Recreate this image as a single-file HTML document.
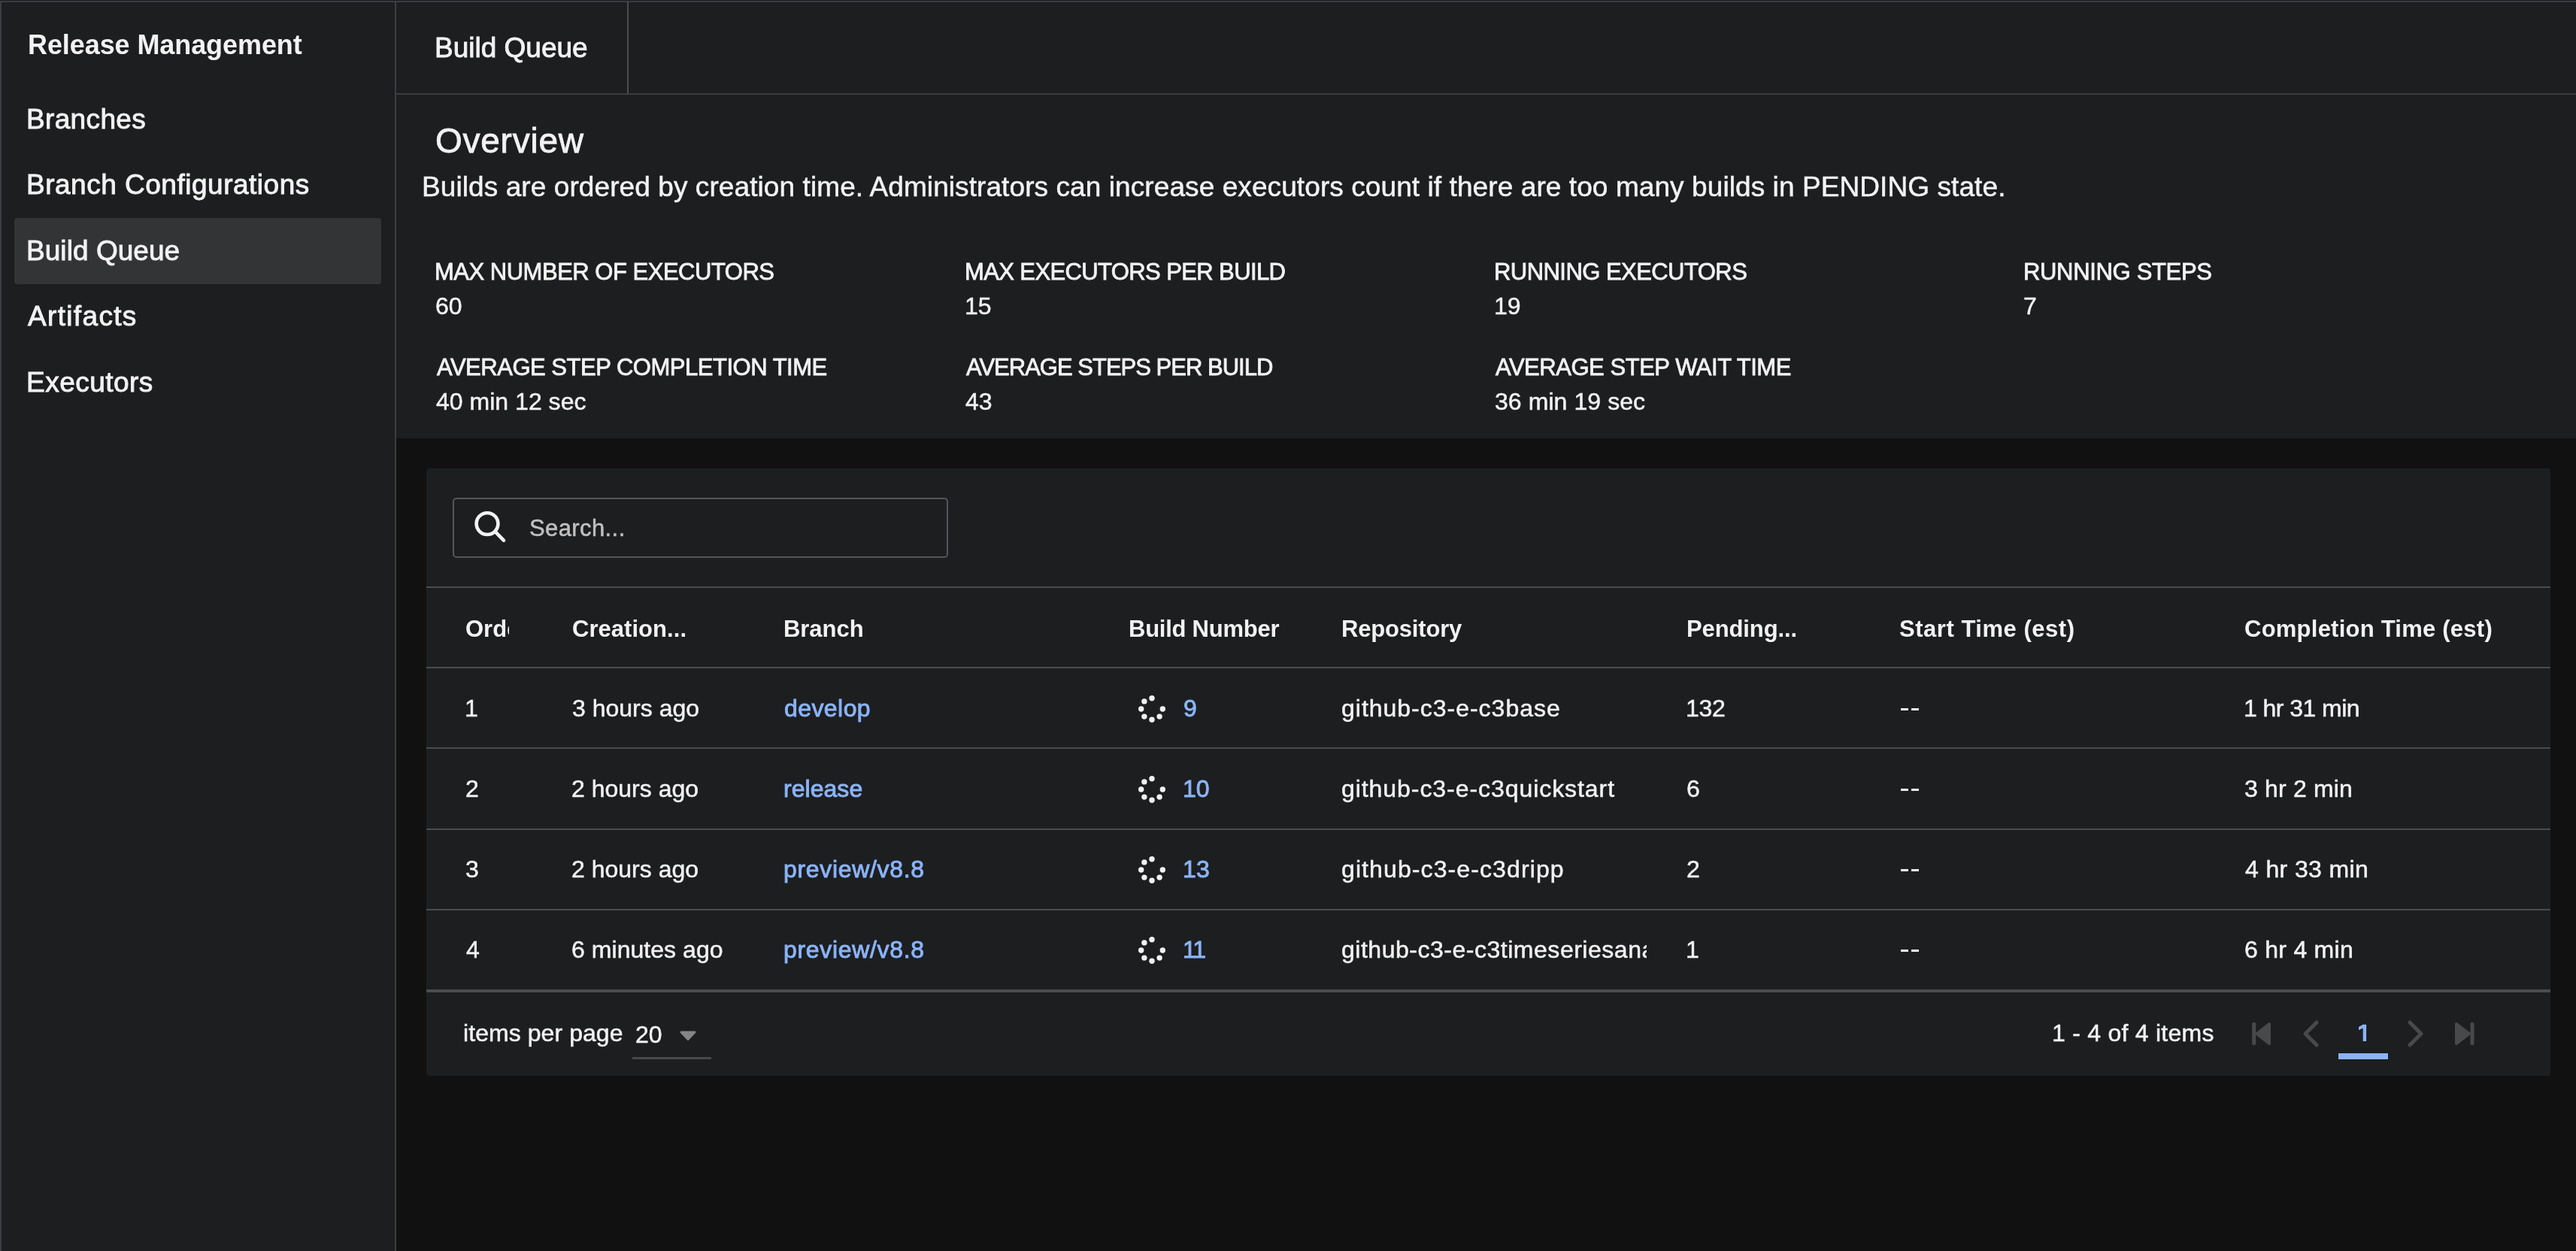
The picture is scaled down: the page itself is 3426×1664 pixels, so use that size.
<!DOCTYPE html>
<html><head><meta charset="utf-8"><style>
html,body{margin:0;padding:0;width:3426px;height:1664px;overflow:hidden;background:#111;}
body{position:relative;font-family:"Liberation Sans",sans-serif;}
div{will-change:transform;}
</style></head><body>
<div style="position:absolute;left:0px;top:0px;width:3426px;height:1664px;background:#1b1c1e;"></div>
<div style="position:absolute;left:0px;top:1px;width:3426px;height:1663px;background:#3c3d41;"></div>
<div style="position:absolute;left:2px;top:3px;width:3424px;height:1661px;background:#1d1e20;"></div>
<div style="position:absolute;left:525px;top:3px;width:2px;height:1661px;background:#3c3d41;"></div>
<div style="position:absolute;left:527px;top:126px;width:2899px;height:1538px;background:#111111;"></div>
<div style="position:absolute;left:527px;top:126px;width:2899px;height:457px;background:#1d1e20;"></div>
<div style="position:absolute;left:527px;top:124px;width:2899px;height:2px;background:#3c3d41;"></div>
<div style="position:absolute;left:834px;top:3px;width:2px;height:121px;background:#4b4c4e;"></div>
<div style="position:absolute;left:19px;top:290px;width:488px;height:88px;background:#333436;border-radius:4px;"></div>
<div style="position:absolute;left:24.66px;top:30px;padding:12px;font-size:36px;line-height:36px;color:#f2f2f2;white-space:nowrap;font-weight:bold;letter-spacing:-0.084px;">Release Management</div>
<div style="position:absolute;left:23.34px;top:128px;padding:12px;font-size:37px;line-height:37px;color:#f2f2f2;white-space:nowrap;letter-spacing:0.347px;-webkit-text-stroke:0.9px #f2f2f2;">Branches</div>
<div style="position:absolute;left:23.34px;top:215px;padding:12px;font-size:37px;line-height:37px;color:#f2f2f2;white-space:nowrap;letter-spacing:0.507px;-webkit-text-stroke:0.9px #f2f2f2;">Branch Configurations</div>
<div style="position:absolute;left:23.24px;top:303px;padding:12px;font-size:37px;line-height:37px;color:#f2f2f2;white-space:nowrap;letter-spacing:0.054px;-webkit-text-stroke:0.9px #f2f2f2;">Build Queue</div>
<div style="position:absolute;left:25.30px;top:390px;padding:12px;font-size:37px;line-height:37px;color:#f2f2f2;white-space:nowrap;letter-spacing:1.341px;-webkit-text-stroke:0.9px #f2f2f2;">Artifacts</div>
<div style="position:absolute;left:23.24px;top:478px;padding:12px;font-size:37px;line-height:37px;color:#f2f2f2;white-space:nowrap;letter-spacing:0.474px;-webkit-text-stroke:0.9px #f2f2f2;">Executors</div>
<div style="position:absolute;left:566.24px;top:33px;padding:12px;font-size:37px;line-height:37px;color:#f2f2f2;white-space:nowrap;-webkit-text-stroke:0.9px #f2f2f2;">Build Queue</div>
<div style="position:absolute;left:566.93px;top:152px;padding:12px;font-size:46px;line-height:46px;color:#f2f2f2;white-space:nowrap;letter-spacing:0.750px;-webkit-text-stroke:0.8px #f2f2f2;">Overview</div>
<div style="position:absolute;left:549.04px;top:218px;padding:12px;font-size:37px;line-height:37px;color:#f2f2f2;white-space:nowrap;letter-spacing:0.086px;-webkit-text-stroke:0.5px #f2f2f2;">Builds are ordered by creation time. Administrators can increase executors count if there are too many builds in PENDING state.</div>
<div style="position:absolute;left:566.02px;top:334px;padding:12px;font-size:31px;line-height:31px;color:#f2f2f2;white-space:nowrap;letter-spacing:-0.491px;-webkit-text-stroke:0.8px #f2f2f2;">MAX NUMBER OF EXECUTORS</div>
<div style="position:absolute;left:566.90px;top:379px;padding:12px;font-size:32px;line-height:32px;color:#f2f2f2;white-space:nowrap;-webkit-text-stroke:0.5px #f2f2f2;">60</div>
<div style="position:absolute;left:1270.52px;top:334px;padding:12px;font-size:31px;line-height:31px;color:#f2f2f2;white-space:nowrap;letter-spacing:-0.613px;-webkit-text-stroke:0.8px #f2f2f2;">MAX EXECUTORS PER BUILD</div>
<div style="position:absolute;left:1270.60px;top:379px;padding:12px;font-size:32px;line-height:32px;color:#f2f2f2;white-space:nowrap;-webkit-text-stroke:0.5px #f2f2f2;">15</div>
<div style="position:absolute;left:1974.52px;top:334px;padding:12px;font-size:31px;line-height:31px;color:#f2f2f2;white-space:nowrap;letter-spacing:-0.548px;-webkit-text-stroke:0.8px #f2f2f2;">RUNNING EXECUTORS</div>
<div style="position:absolute;left:1974.60px;top:379px;padding:12px;font-size:32px;line-height:32px;color:#f2f2f2;white-space:nowrap;-webkit-text-stroke:0.5px #f2f2f2;">19</div>
<div style="position:absolute;left:2678.52px;top:334px;padding:12px;font-size:31px;line-height:31px;color:#f2f2f2;white-space:nowrap;letter-spacing:-0.329px;-webkit-text-stroke:0.8px #f2f2f2;">RUNNING STEPS</div>
<div style="position:absolute;left:2679.40px;top:379px;padding:12px;font-size:32px;line-height:32px;color:#f2f2f2;white-space:nowrap;-webkit-text-stroke:0.5px #f2f2f2;">7</div>
<div style="position:absolute;left:568.50px;top:461px;padding:12px;font-size:31px;line-height:31px;color:#f2f2f2;white-space:nowrap;letter-spacing:-0.483px;-webkit-text-stroke:0.8px #f2f2f2;">AVERAGE STEP COMPLETION TIME</div>
<div style="position:absolute;left:567.86px;top:506px;padding:12px;font-size:32px;line-height:32px;color:#f2f2f2;white-space:nowrap;letter-spacing:0.020px;-webkit-text-stroke:0.5px #f2f2f2;">40 min 12 sec</div>
<div style="position:absolute;left:1273.00px;top:461px;padding:12px;font-size:31px;line-height:31px;color:#f2f2f2;white-space:nowrap;letter-spacing:-0.988px;-webkit-text-stroke:0.8px #f2f2f2;">AVERAGE STEPS PER BUILD</div>
<div style="position:absolute;left:1272.36px;top:506px;padding:12px;font-size:32px;line-height:32px;color:#f2f2f2;white-space:nowrap;-webkit-text-stroke:0.5px #f2f2f2;">43</div>
<div style="position:absolute;left:1977.00px;top:461px;padding:12px;font-size:31px;line-height:31px;color:#f2f2f2;white-space:nowrap;letter-spacing:-0.465px;-webkit-text-stroke:0.8px #f2f2f2;">AVERAGE STEP WAIT TIME</div>
<div style="position:absolute;left:1975.72px;top:506px;padding:12px;font-size:32px;line-height:32px;color:#f2f2f2;white-space:nowrap;letter-spacing:0.073px;-webkit-text-stroke:0.5px #f2f2f2;">36 min 19 sec</div>
<div style="position:absolute;left:567px;top:623px;width:2825px;height:808px;background:#1d1e20;border-radius:4px;"></div>
<div style="position:absolute;left:602px;top:662px;width:655px;height:76px;border:2px solid #555658;border-radius:5px;"></div>
<svg style="position:absolute;left:620px;top:670px" width="60" height="60" viewBox="620 670 60 60"><circle cx="648" cy="696.6" r="14.4" fill="none" stroke="#f2f2f2" stroke-width="4.6"/><line x1="659" y1="707.6" x2="670" y2="718.8" stroke="#f2f2f2" stroke-width="4.6" stroke-linecap="round"/></svg>
<div style="position:absolute;left:691.61px;top:675px;padding:12px;font-size:31px;line-height:31px;color:#c0c0c0;white-space:nowrap;letter-spacing:0.398px;-webkit-text-stroke:0.5px #c0c0c0;">Search...</div>
<div style="position:absolute;left:567px;top:780px;width:2825px;height:2px;background:#4b4c4e;"></div>
<div style="position:absolute;left:567px;top:887px;width:2825px;height:2px;background:#4b4c4e;"></div>
<div style="position:absolute;left:567px;top:994px;width:2825px;height:2px;background:#4b4c4e;"></div>
<div style="position:absolute;left:567px;top:1102px;width:2825px;height:2px;background:#4b4c4e;"></div>
<div style="position:absolute;left:567px;top:1209px;width:2825px;height:2px;background:#4b4c4e;"></div>
<div style="position:absolute;left:567px;top:1316px;width:2825px;height:4px;background:#4b4c4e;"></div>
<div style="position:absolute;left:607.16px;top:809px;padding:12px;font-size:31px;line-height:31px;color:#f2f2f2;white-space:nowrap;font-weight:bold;width:58.44px;padding-right:0;overflow:hidden;">Order</div>
<div style="position:absolute;left:748.76px;top:809px;padding:12px;font-size:31px;line-height:31px;color:#f2f2f2;white-space:nowrap;font-weight:bold;letter-spacing:0.042px;">Creation...</div>
<div style="position:absolute;left:1030.28px;top:809px;padding:12px;font-size:31px;line-height:31px;color:#f2f2f2;white-space:nowrap;font-weight:bold;letter-spacing:-0.044px;">Branch</div>
<div style="position:absolute;left:1489.38px;top:809px;padding:12px;font-size:31px;line-height:31px;color:#f2f2f2;white-space:nowrap;font-weight:bold;letter-spacing:-0.248px;">Build Number</div>
<div style="position:absolute;left:1771.78px;top:809px;padding:12px;font-size:31px;line-height:31px;color:#f2f2f2;white-space:nowrap;font-weight:bold;letter-spacing:-0.183px;">Repository</div>
<div style="position:absolute;left:2230.99px;top:809px;padding:12px;font-size:31px;line-height:31px;color:#f2f2f2;white-space:nowrap;font-weight:bold;letter-spacing:-0.111px;">Pending...</div>
<div style="position:absolute;left:2514.37px;top:809px;padding:12px;font-size:31px;line-height:31px;color:#f2f2f2;white-space:nowrap;font-weight:bold;letter-spacing:0.524px;">Start Time (est)</div>
<div style="position:absolute;left:2973.46px;top:809px;padding:12px;font-size:31px;line-height:31px;color:#f2f2f2;white-space:nowrap;font-weight:bold;letter-spacing:0.238px;">Completion Time (est)</div>
<div style="position:absolute;left:606.10px;top:914px;padding:12px;font-size:32px;line-height:32px;color:#f2f2f2;white-space:nowrap;-webkit-text-stroke:0.5px #f2f2f2;">1</div>
<div style="position:absolute;left:748.72px;top:914px;padding:12px;font-size:32px;line-height:32px;color:#f2f2f2;white-space:nowrap;-webkit-text-stroke:0.5px #f2f2f2;">3 hours ago</div>
<div style="position:absolute;left:1030.72px;top:914px;padding:12px;font-size:32px;line-height:32px;color:#8ab4f8;white-space:nowrap;letter-spacing:0.427px;-webkit-text-stroke:0.9px #8ab4f8;">develop</div>
<svg style="position:absolute;left:1512.40px;top:922.60px" width="40" height="40"><circle cx="20.00" cy="5.70" r="3.7" fill="#f2f2f2"/><circle cx="34.30" cy="20.00" r="3.7" fill="#f2f2f2"/><circle cx="30.11" cy="30.11" r="3.7" fill="#f2f2f2"/><circle cx="20.00" cy="34.30" r="3.7" fill="#f2f2f2"/><circle cx="9.89" cy="30.11" r="3.7" fill="#f2f2f2"/><circle cx="5.70" cy="20.00" r="3.7" fill="#f2f2f2"/><circle cx="9.89" cy="9.89" r="3.7" fill="#f2f2f2"/></svg>
<div style="position:absolute;left:1562.06px;top:914px;padding:12px;font-size:32px;line-height:32px;color:#8ab4f8;white-space:nowrap;-webkit-text-stroke:0.9px #8ab4f8;">9</div>
<div style="position:absolute;left:1772.22px;top:914px;padding:12px;font-size:32px;line-height:32px;color:#f2f2f2;white-space:nowrap;letter-spacing:0.988px;-webkit-text-stroke:0.5px #f2f2f2;width:405.78px;padding-right:0;overflow:hidden;">github-c3-e-c3base</div>
<div style="position:absolute;left:2230.10px;top:914px;padding:12px;font-size:32px;line-height:32px;color:#f2f2f2;white-space:nowrap;letter-spacing:-0.290px;-webkit-text-stroke:0.5px #f2f2f2;">132</div>
<div style="position:absolute;left:2528px;top:942px;width:10px;height:3px;background:#f2f2f2;"></div>
<div style="position:absolute;left:2542px;top:942px;width:10px;height:3px;background:#f2f2f2;"></div>
<div style="position:absolute;left:2971.90px;top:914px;padding:12px;font-size:32px;line-height:32px;color:#f2f2f2;white-space:nowrap;letter-spacing:-0.552px;-webkit-text-stroke:0.5px #f2f2f2;">1 hr 31 min</div>
<div style="position:absolute;left:606.90px;top:1021px;padding:12px;font-size:32px;line-height:32px;color:#f2f2f2;white-space:nowrap;-webkit-text-stroke:0.5px #f2f2f2;">2</div>
<div style="position:absolute;left:748.40px;top:1021px;padding:12px;font-size:32px;line-height:32px;color:#f2f2f2;white-space:nowrap;-webkit-text-stroke:0.5px #f2f2f2;">2 hours ago</div>
<div style="position:absolute;left:1029.92px;top:1021px;padding:12px;font-size:32px;line-height:32px;color:#8ab4f8;white-space:nowrap;letter-spacing:0.043px;-webkit-text-stroke:0.9px #8ab4f8;">release</div>
<svg style="position:absolute;left:1512.40px;top:1029.60px" width="40" height="40"><circle cx="20.00" cy="5.70" r="3.7" fill="#f2f2f2"/><circle cx="34.30" cy="20.00" r="3.7" fill="#f2f2f2"/><circle cx="30.11" cy="30.11" r="3.7" fill="#f2f2f2"/><circle cx="20.00" cy="34.30" r="3.7" fill="#f2f2f2"/><circle cx="9.89" cy="30.11" r="3.7" fill="#f2f2f2"/><circle cx="5.70" cy="20.00" r="3.7" fill="#f2f2f2"/><circle cx="9.89" cy="9.89" r="3.7" fill="#f2f2f2"/></svg>
<div style="position:absolute;left:1561.10px;top:1021px;padding:12px;font-size:32px;line-height:32px;color:#8ab4f8;white-space:nowrap;-webkit-text-stroke:0.9px #8ab4f8;">10</div>
<div style="position:absolute;left:1772.22px;top:1021px;padding:12px;font-size:32px;line-height:32px;color:#f2f2f2;white-space:nowrap;letter-spacing:0.939px;-webkit-text-stroke:0.5px #f2f2f2;width:405.78px;padding-right:0;overflow:hidden;">github-c3-e-c3quickstart</div>
<div style="position:absolute;left:2230.90px;top:1021px;padding:12px;font-size:32px;line-height:32px;color:#f2f2f2;white-space:nowrap;-webkit-text-stroke:0.5px #f2f2f2;">6</div>
<div style="position:absolute;left:2528px;top:1049px;width:10px;height:3px;background:#f2f2f2;"></div>
<div style="position:absolute;left:2542px;top:1049px;width:10px;height:3px;background:#f2f2f2;"></div>
<div style="position:absolute;left:2973.02px;top:1021px;padding:12px;font-size:32px;line-height:32px;color:#f2f2f2;white-space:nowrap;letter-spacing:0.169px;-webkit-text-stroke:0.5px #f2f2f2;">3 hr 2 min</div>
<div style="position:absolute;left:607.22px;top:1128px;padding:12px;font-size:32px;line-height:32px;color:#f2f2f2;white-space:nowrap;-webkit-text-stroke:0.5px #f2f2f2;">3</div>
<div style="position:absolute;left:748.40px;top:1128px;padding:12px;font-size:32px;line-height:32px;color:#f2f2f2;white-space:nowrap;-webkit-text-stroke:0.5px #f2f2f2;">2 hours ago</div>
<div style="position:absolute;left:1029.92px;top:1128px;padding:12px;font-size:32px;line-height:32px;color:#8ab4f8;white-space:nowrap;letter-spacing:0.671px;-webkit-text-stroke:0.9px #8ab4f8;">preview/v8.8</div>
<svg style="position:absolute;left:1512.40px;top:1136.60px" width="40" height="40"><circle cx="20.00" cy="5.70" r="3.7" fill="#f2f2f2"/><circle cx="34.30" cy="20.00" r="3.7" fill="#f2f2f2"/><circle cx="30.11" cy="30.11" r="3.7" fill="#f2f2f2"/><circle cx="20.00" cy="34.30" r="3.7" fill="#f2f2f2"/><circle cx="9.89" cy="30.11" r="3.7" fill="#f2f2f2"/><circle cx="5.70" cy="20.00" r="3.7" fill="#f2f2f2"/><circle cx="9.89" cy="9.89" r="3.7" fill="#f2f2f2"/></svg>
<div style="position:absolute;left:1561.10px;top:1128px;padding:12px;font-size:32px;line-height:32px;color:#8ab4f8;white-space:nowrap;letter-spacing:0.160px;-webkit-text-stroke:0.9px #8ab4f8;">13</div>
<div style="position:absolute;left:1772.22px;top:1128px;padding:12px;font-size:32px;line-height:32px;color:#f2f2f2;white-space:nowrap;letter-spacing:1.104px;-webkit-text-stroke:0.5px #f2f2f2;width:405.78px;padding-right:0;overflow:hidden;">github-c3-e-c3dripp</div>
<div style="position:absolute;left:2230.90px;top:1128px;padding:12px;font-size:32px;line-height:32px;color:#f2f2f2;white-space:nowrap;-webkit-text-stroke:0.5px #f2f2f2;">2</div>
<div style="position:absolute;left:2528px;top:1156px;width:10px;height:3px;background:#f2f2f2;"></div>
<div style="position:absolute;left:2542px;top:1156px;width:10px;height:3px;background:#f2f2f2;"></div>
<div style="position:absolute;left:2973.66px;top:1128px;padding:12px;font-size:32px;line-height:32px;color:#f2f2f2;white-space:nowrap;letter-spacing:0.372px;-webkit-text-stroke:0.5px #f2f2f2;">4 hr 33 min</div>
<div style="position:absolute;left:607.86px;top:1235px;padding:12px;font-size:32px;line-height:32px;color:#f2f2f2;white-space:nowrap;-webkit-text-stroke:0.5px #f2f2f2;">4</div>
<div style="position:absolute;left:748.40px;top:1235px;padding:12px;font-size:32px;line-height:32px;color:#f2f2f2;white-space:nowrap;letter-spacing:0.043px;-webkit-text-stroke:0.5px #f2f2f2;">6 minutes ago</div>
<div style="position:absolute;left:1029.92px;top:1235px;padding:12px;font-size:32px;line-height:32px;color:#8ab4f8;white-space:nowrap;letter-spacing:0.671px;-webkit-text-stroke:0.9px #8ab4f8;">preview/v8.8</div>
<svg style="position:absolute;left:1512.40px;top:1243.60px" width="40" height="40"><circle cx="20.00" cy="5.70" r="3.7" fill="#f2f2f2"/><circle cx="34.30" cy="20.00" r="3.7" fill="#f2f2f2"/><circle cx="30.11" cy="30.11" r="3.7" fill="#f2f2f2"/><circle cx="20.00" cy="34.30" r="3.7" fill="#f2f2f2"/><circle cx="9.89" cy="30.11" r="3.7" fill="#f2f2f2"/><circle cx="5.70" cy="20.00" r="3.7" fill="#f2f2f2"/><circle cx="9.89" cy="9.89" r="3.7" fill="#f2f2f2"/></svg>
<div style="position:absolute;left:1561.10px;top:1235px;padding:12px;font-size:32px;line-height:32px;color:#8ab4f8;white-space:nowrap;letter-spacing:-2.280px;-webkit-text-stroke:0.9px #8ab4f8;">11</div>
<div style="position:absolute;left:1772.22px;top:1235px;padding:12px;font-size:32px;line-height:32px;color:#f2f2f2;white-space:nowrap;letter-spacing:0.520px;-webkit-text-stroke:0.5px #f2f2f2;width:405.78px;padding-right:0;overflow:hidden;">github-c3-e-c3timeseriesanalytics</div>
<div style="position:absolute;left:2230.10px;top:1235px;padding:12px;font-size:32px;line-height:32px;color:#f2f2f2;white-space:nowrap;-webkit-text-stroke:0.5px #f2f2f2;">1</div>
<div style="position:absolute;left:2528px;top:1263px;width:10px;height:3px;background:#f2f2f2;"></div>
<div style="position:absolute;left:2542px;top:1263px;width:10px;height:3px;background:#f2f2f2;"></div>
<div style="position:absolute;left:2972.70px;top:1235px;padding:12px;font-size:32px;line-height:32px;color:#f2f2f2;white-space:nowrap;letter-spacing:0.271px;-webkit-text-stroke:0.5px #f2f2f2;">6 hr 4 min</div>
<div style="position:absolute;left:604.12px;top:1346px;padding:12px;font-size:32px;line-height:32px;color:#f2f2f2;white-space:nowrap;letter-spacing:0.065px;-webkit-text-stroke:0.5px #f2f2f2;">items per page</div>
<div style="position:absolute;left:833.00px;top:1348px;padding:12px;font-size:32px;line-height:32px;color:#f2f2f2;white-space:nowrap;-webkit-text-stroke:0.5px #f2f2f2;">20</div>
<svg style="position:absolute;left:895px;top:1360px" width="40" height="35" viewBox="895 1360 40 35"><path d="M906 1373 L924 1373 L915 1382.6 Z" fill="#858585" stroke="#858585" stroke-width="2.8" stroke-linejoin="round"/></svg>
<div style="position:absolute;left:841px;top:1406px;width:105px;height:3px;background:#48494b;"></div>
<div style="position:absolute;left:2716.60px;top:1346px;padding:12px;font-size:32px;line-height:32px;color:#f2f2f2;white-space:nowrap;letter-spacing:0.256px;-webkit-text-stroke:0.5px #f2f2f2;">1 - 4 of 4 items</div>
<svg style="position:absolute;left:2980px;top:1350px" width="330" height="50" viewBox="2980 1350 330 50">
<line x1="2997.7" y1="1362.3" x2="2997.7" y2="1387.7" stroke="#48494a" stroke-width="5" stroke-linecap="round"/>
<path d="M3018 1362 L3001.5 1375 L3018 1388 Z" fill="#48494a" stroke="#48494a" stroke-width="4" stroke-linejoin="round"/>
<polyline points="3081,1360 3066,1375 3081,1390" fill="none" stroke="#48494a" stroke-width="5" stroke-linecap="round" stroke-linejoin="round"/>
<polyline points="3205,1360 3220,1375 3205,1390" fill="none" stroke="#48494a" stroke-width="5" stroke-linecap="round" stroke-linejoin="round"/>
<path d="M3267 1362 L3284 1375 L3267 1388 Z" fill="#48494a" stroke="#48494a" stroke-width="4" stroke-linejoin="round"/>
<line x1="3288" y1="1362.3" x2="3288" y2="1387.7" stroke="#48494a" stroke-width="5" stroke-linecap="round"/>
</svg>
<svg style="position:absolute;left:3130px;top:1355px" width="25" height="40" viewBox="3130 1355 25 40"><path d="M3142.7 1362.7 L3147.1 1362.7 L3147.1 1385 L3142.7 1385 L3142.7 1367.4 L3137 1370.3 L3137 1366 Z" fill="#8ab4f8"/></svg>
<div style="position:absolute;left:3110px;top:1401px;width:66px;height:8px;background:#8ab4f8;"></div>
</body></html>
